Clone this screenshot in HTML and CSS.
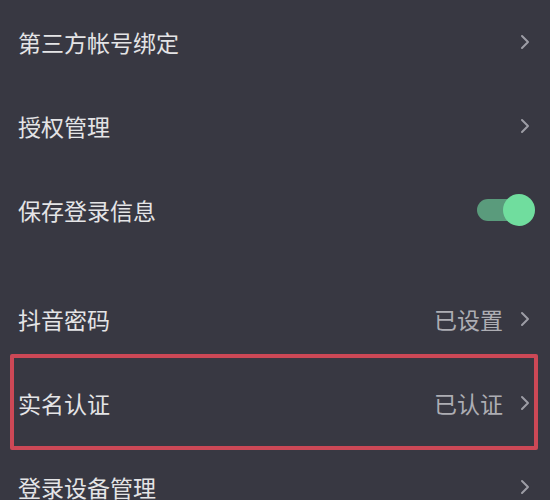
FILE: index.html
```html
<!DOCTYPE html>
<html lang="zh-CN">
<head>
<meta charset="utf-8">
<title>设置</title>
<link rel="stylesheet" href="styles.css">
</head>
<body>
<div class="page">
  <div class="group">
    <div class="row">
      <span class="label">第三方帐号绑定</span>
      <span class="right"><svg class="chev" viewBox="0 0 10 16"><polyline points="2,2 8,8 2,14"/></svg></span>
    </div>
    <div class="row">
      <span class="label">授权管理</span>
      <span class="right"><svg class="chev" viewBox="0 0 10 16"><polyline points="2,2 8,8 2,14"/></svg></span>
    </div>
    <div class="row toggle-row">
      <span class="label">保存登录信息</span>
      <span class="toggle"><span class="track"></span><span class="knob"></span></span>
    </div>
  </div>
  <div class="group second">
    <div class="row">
      <span class="label">抖音密码</span>
      <span class="right"><span class="value">已设置</span><svg class="chev" viewBox="0 0 10 16"><polyline points="2,2 8,8 2,14"/></svg></span>
    </div>
    <div class="row highlighted">
      <span class="label">实名认证</span>
      <span class="right"><span class="value">已认证</span><svg class="chev" viewBox="0 0 10 16"><polyline points="2,2 8,8 2,14"/></svg></span>
    </div>
    <div class="row">
      <span class="label">登录设备管理</span>
      <span class="right"><svg class="chev" viewBox="0 0 10 16"><polyline points="2,2 8,8 2,14"/></svg></span>
    </div>
  </div>
</div>
</body>
</html>
```

FILE: styles.css
```css
html, body {
  margin: 0;
  padding: 0;
  background: #383842;
}
body {
  width: 550px;
  height: 500px;
  overflow: hidden;
  font-family: "Noto Sans CJK SC", "Noto Sans", sans-serif;
}
.page {
  display: flex;
  flex-direction: column;
}
.group {
  display: flex;
  flex-direction: column;
}
.second {
  margin-top: 25px;
}
.row {
  position: relative;
  height: 84px;
  display: flex;
  align-items: center;
  justify-content: space-between;
  padding: 0 20px 0 18px;
}
.label {
  font-size: 23px;
  line-height: 1;
  color: #e4e4e6;
}
.right {
  display: flex;
  align-items: center;
  gap: 17px;
}
.value {
  font-size: 23px;
  line-height: 1;
  color: #adadb3;
}
.chev {
  width: 10px;
  height: 16px;
  fill: none;
  stroke: #9d9da5;
  stroke-width: 2;
  stroke-linecap: round;
  stroke-linejoin: round;
}
.toggle-row {
  padding-right: 15px;
}
.toggle {
  position: relative;
  width: 58px;
  height: 32px;
}
.track {
  position: absolute;
  left: 0;
  top: 5px;
  width: 52px;
  height: 22px;
  border-radius: 11px;
  background: #5a9b7c;
}
.knob {
  position: absolute;
  right: 0;
  top: 0;
  width: 32px;
  height: 32px;
  border-radius: 50%;
  background: #70dd9e;
}
.highlighted::after {
  content: "";
  position: absolute;
  top: -7px;
  bottom: -5px;
  left: 10px;
  right: 12px;
  border: 4px solid #cc4856;
  border-radius: 2px;
  pointer-events: none;
}
```
